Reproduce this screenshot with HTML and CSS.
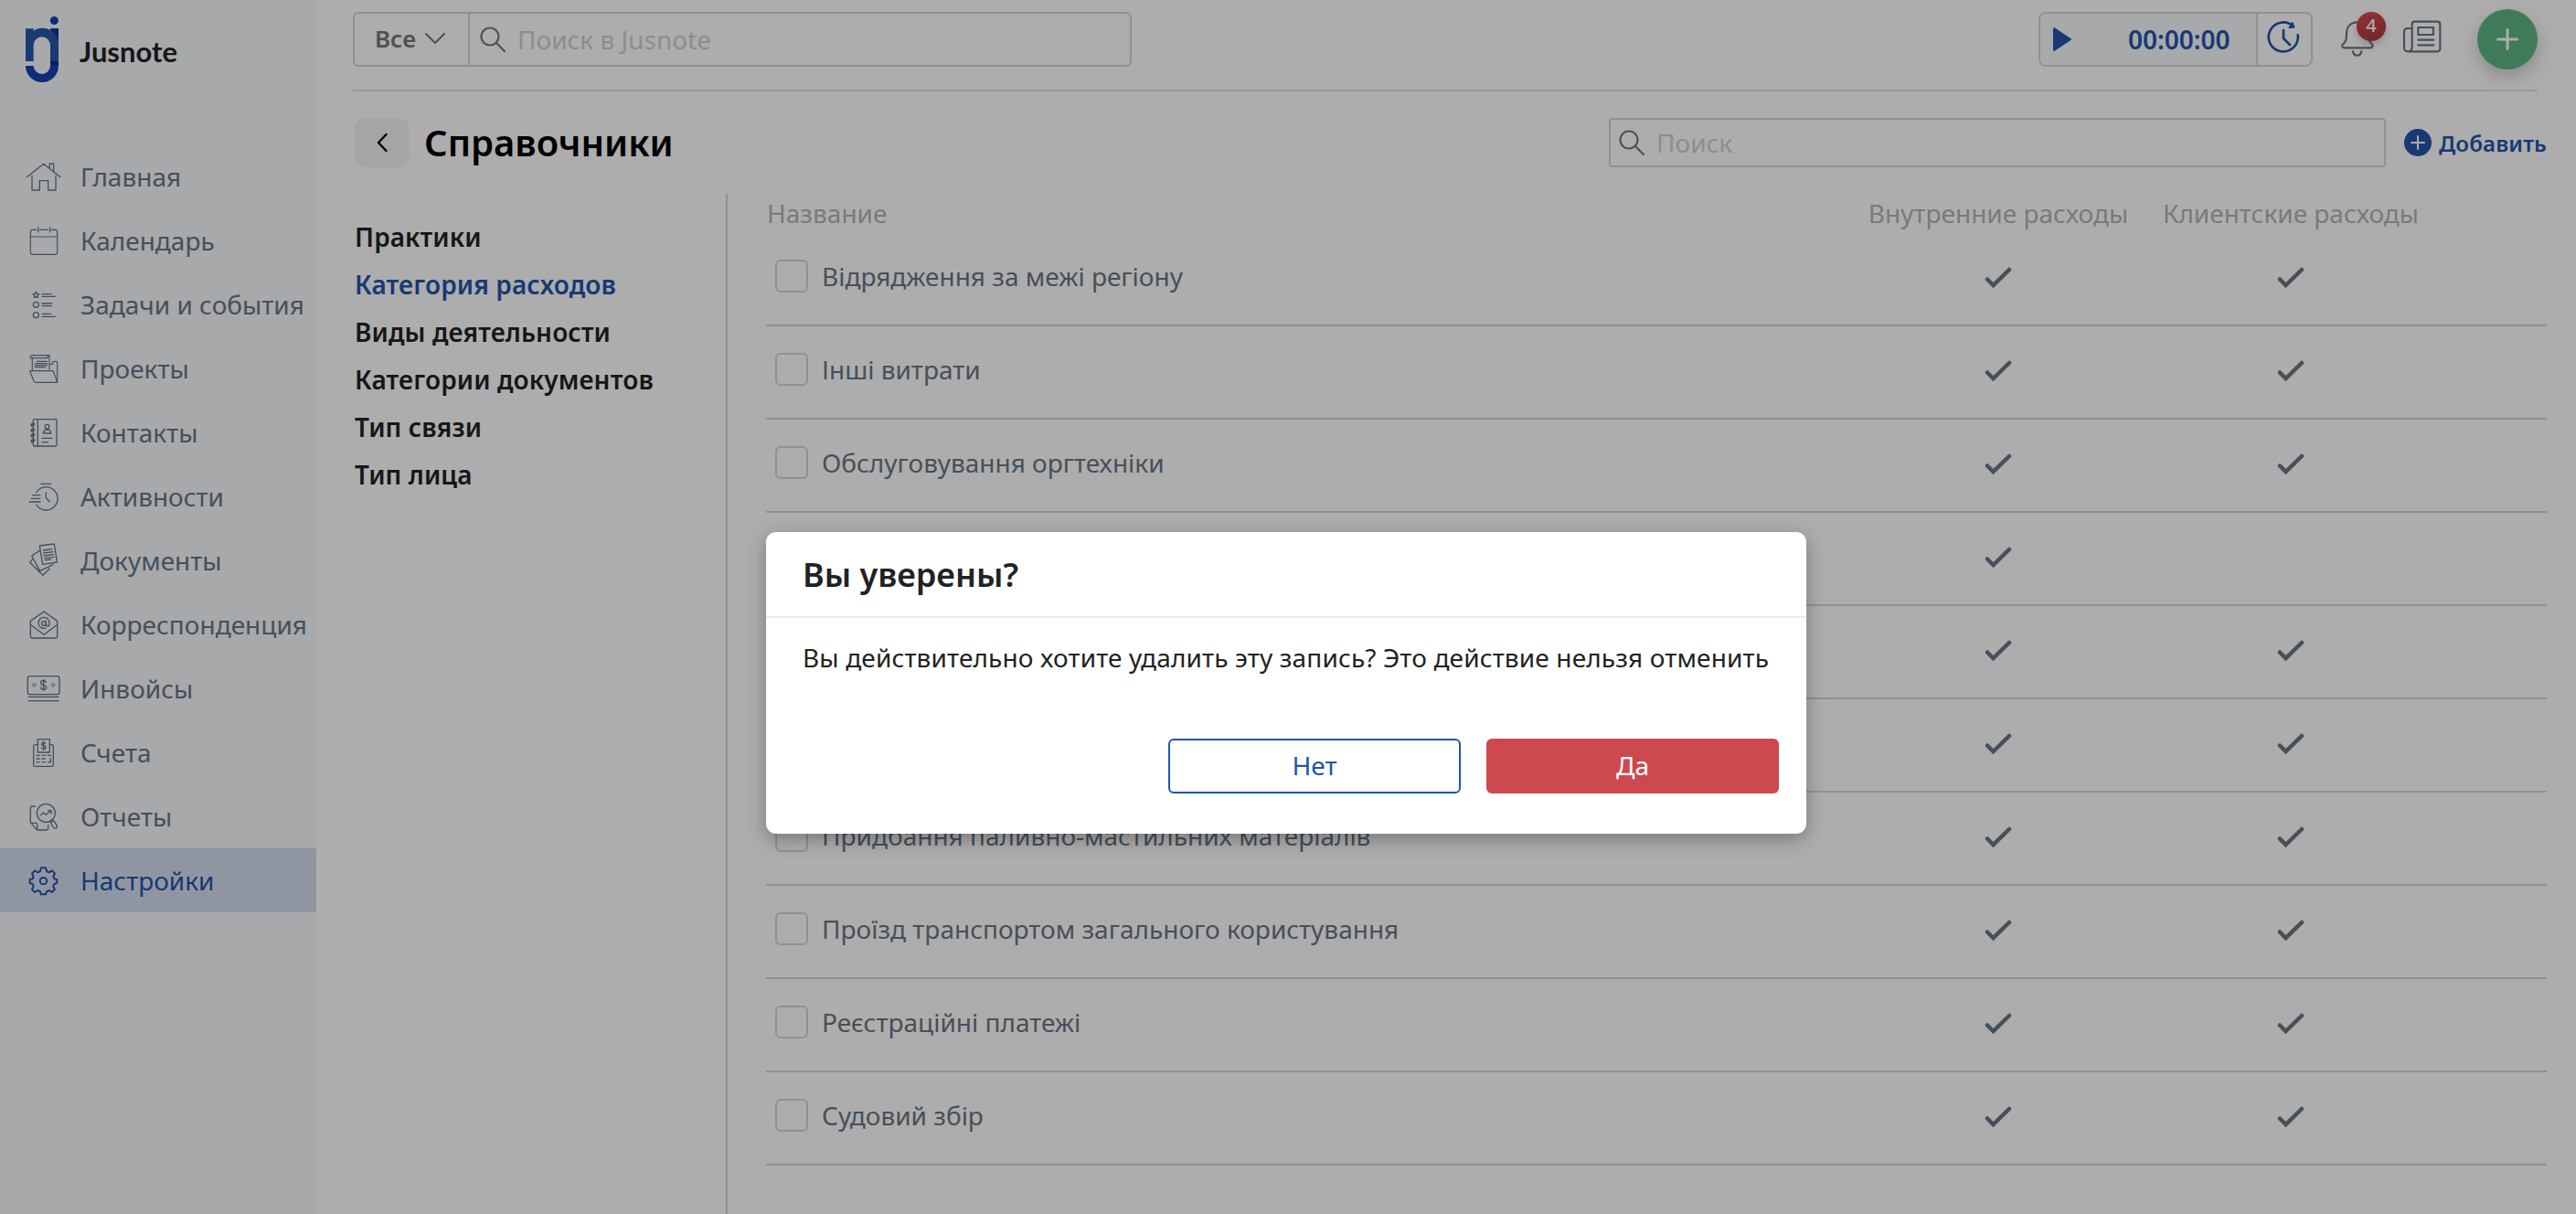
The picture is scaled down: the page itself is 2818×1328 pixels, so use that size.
FILE: index.html
```html
<!DOCTYPE html>
<html lang="ru">
<head>
    <meta charset="UTF-8">
    <meta name="viewport" content="width=device-width, initial-scale=1.0">
    <title>Jusnote - Справочники</title>
    <link rel="stylesheet" href="styles.css">
</head>
<body>
    <aside class="sidebar">
        <div class="logo">
            <svg class="logo-mark" viewBox="84 54 108 216">
                <circle cx="178" cy="67.500" r="13.500" fill="#1841b0"/>
                <path d="M165 94h27v122a54 54 0 0 1-108 0h26a27.500 27 0 0 0 55 0z" fill="#1841b0"/>
                <path d="M165 94h27v36z" fill="#0f3197"/>
                <path d="M165 201h27v14h-27z" fill="#102f8f"/>
                <path d="M84 94h26v7c8-6 17-9 28-9 31 0 54 22 54 52v57h-27v-53a27.500 27 0 0 0-55 0v53H84z" fill="#2556a8"/>
            </svg>
            <span class="logo-text">Jusnote</span>
        </div>
        <nav class="menu">
            <a class="menu-item">
                <svg viewBox="84 519 120 120"><path d="M88 581l55-43 55 43M105 577v47h25v-31h28v31h25v-47M163 551v-14h13v25"/></svg>
                <span>Главная</span>
            </a>
            <a class="menu-item thin">
                <svg viewBox="84 729 120 120"><path d="M119 754h-12q-7 0-7 7v67q0 7 7 7h74q7 0 7-7v-67q0-7-7-7h-13M130 754h28M125 746v16M164 746v16M100 777h88"/></svg>
                <span>Календарь</span>
            </a>
            <a class="menu-item">
                <svg viewBox="84 939 120 120"><path d="M118 957l3 7 7 1-5 5 1 7-6-4-6 4 1-7-5-5 7-1zM138 965h30M138 973h43M138 996h32M138 1004h32M138 1030h30M138 1039h43"/><circle cx="118" cy="1000" r="9"/><circle cx="118" cy="1034" r="9"/></svg>
                <span>Задачи и события</span>
            </a>
            <a class="menu-item thin">
                <svg viewBox="84 69 120 120"><path d="M106 135V95h-6q-2-9 7-9h55v46M106 95h50q0-9 6-9M165 115h8v-6q0-3 5-3h5q5 0 5 5v64M98 137h73q4 0 5 4l12 34h-71q-5 0-6-4zM121 106h34M115 113h40M115 119h40M115 125h34"/></svg>
                <span>Проекты</span>
            </a>
            <a class="menu-item">
                <svg viewBox="84 279 120 120"><rect x="109" y="296" width="77" height="88" rx="4"/><path d="M124 296v88M102 314h11M102 332h11M102 349h11M102 367h11M113 310q-11-1-11 4t6 5M113 328q-11-1-11 4t6 5M113 345q-11-1-11 4t6 5M113 363q-11-1-11 4t6 5M142 342q1-12 13-12t12 12zM138 358h33M138 371h20"/><circle cx="154.500" cy="320" r="7"/></svg>
                <span>Контакты</span>
            </a>
            <a class="menu-item">
                <svg viewBox="84 489 120 120"><path d="M134 508h34M119 536a38 38 0 1 1 0 40M151 536v18l12 12M107 545h25M103 556h29M97 567h35"/></svg>
                <span>Активности</span>
            </a>
            <a class="menu-item">
                <svg viewBox="84 699 120 120"><path d="M130 711l48-6 9 60-47 7zM130 727l-26 17 27 50 43-21M106 756l-8 10 43 42 22-22M142 726l28-4M143 735l31-4M144 744l31-4M146 752l31-4M149 758l17-2"/></svg>
                <span>Документы</span>
            </a>
            <a class="menu-item">
                <svg viewBox="24 39 120 120"><path d="M40 88l44-31 44 31v51q0 5-5 5H45q-5 0-5-5zM40 100l44 33 44-33M90 111a18 18 0 1 1 12-16q0 11-6 10-5 0-5-8V89"/><circle cx="84" cy="96" r="7"/></svg>
                <span>Корреспонденция</span>
            </a>
            <a class="menu-item">
                <svg viewBox="84 159 120 120"><rect x="91" y="179" width="104" height="60" rx="7"/><g stroke-width="2.500"><circle cx="112" cy="208" r="5"/><circle cx="174" cy="208" r="5"/></g><path d="M151 199q-2-6-9-6-8 0-8 7t8 8q10 2 10 9 0 6-9 6-8 0-9-7M143 190v36M94 247h98M94 260h98"/></svg>
                <span>Инвойсы</span>
            </a>
            <a class="menu-item">
                <svg viewBox="84 369 120 120"><path d="M124 404h-9q-5 0-5 5v61q0 5 5 5h55q5 0 5-5v-61q0-5-5-5h-7M124 386h39v43h-39zM149 400q-2-3-6-3-6 0-6 5t6 5q7 1 7 6t-7 5q-5 0-7-4M143 393v28M120 439h10M138 439h10M156 439h11M120 450h10M138 450h10M120 461h10M138 461h10M158 461h8v-12"/></svg>
                <span>Счета</span>
            </a>
            <a class="menu-item">
                <svg viewBox="84 579 120 120"><circle cx="151" cy="628" r="30"/><path d="M115 606h-10q-5 0-5 5v48l22 25h31q5 0 5-5v-12M101 661h17q4 0 4 5v18M133 635l9-8 8 7 17-13M158 620h10v10M168 652l4 5M166 659q-2-5 3-7 6-2 9 4l9 13q2 6-3 9-6 2-9-3z"/></svg>
                <span>Отчеты</span>
            </a>
            <a class="menu-item active">
                <svg viewBox="84 789 120 120"><circle cx="142.500" cy="851" r="11"/><path d="M135 808h15l3 11 8 4 10-6 9 10-5 9 3 8 9 2v12l-9 3-3 8 5 9-9 10-10-6-8 4-3 9h-15l-3-9-8-4-10 6-9-10 5-9-3-8-9-3v-12l9-2 3-8-5-9 9-10 10 6 8-4z"/></svg>
                <span>Настройки</span>
            </a>
        </nav>
    </aside>

    <main class="main">
        <header class="topbar">
            <div class="global-search">
                <div class="search-scope">
                    <span>Все</span>
                    <svg width="24" height="14" viewBox="0 0 24 14"><path d="M2 2l10 10L22 2"/></svg>
                </div>
                <div class="search-field">
                    <svg class="search-icon" viewBox="0 0 28 28"><circle cx="11" cy="11" r="9.500"/><path d="M18 18l9 9"/></svg>
                    <span>Поиск в Jusnote</span>
                </div>
            </div>
            <div class="topbar-right">
                <div class="timer">
                    <div class="timer-main">
                        <svg width="22" height="28" viewBox="0 0 22 28"><path d="M2 2v24l18-12z"/></svg>
                        <span>00:00:00</span>
                    </div>
                    <div class="timer-history">
                        <svg width="38" height="38" viewBox="117 66 114 114"><path d="M206 86a48 48 0 1 0 15 29M174 99v27l21 21"/><path d="M204 74l5 16-17 1z"/></svg>
                    </div>
                </div>
                <div class="bell">
                    <svg width="40" height="42" viewBox="363 63 120 126"><path d="M376 138c4-6 5-12 5-27 0-24 14-38 36-38s36 16 36 38c0 15 1 21 5 27l6 6q4 5 2 9-1 4-6 4h-86q-6 0-7-4-1-5 3-9zM402 168q2 14 14 14t14-14"/></svg>
                    <span class="badge">4</span>
                </div>
                <svg class="news" width="44" height="38" viewBox="564 63 132 114"><path d="M596 152V80q0-9 9-9h74q9 0 9 9v80q0 9-9 9h-96q-13 0-13-13v-51q0-12 12-12h14M596 152q0 17-13 17M616 90h50v24h-50zM616 131h51M616 148h51"/></svg>
                <button class="create-btn">
                    <svg width="24" height="24" viewBox="0 0 24 24"><path d="M12 1.500v21M1.500 12h21"/></svg>
                </button>
            </div>
        </header>

        <div class="page-head">
            <button class="back-btn">
                <svg width="12" height="22" viewBox="0 0 12 22"><path d="M10.500 2L2 11l8.500 9"/></svg>
            </button>
            <h1>Справочники</h1>
            <div class="page-search">
                <svg class="search-icon" viewBox="0 0 28 28"><circle cx="11" cy="11" r="9.500"/><path d="M18 18l9 9"/></svg>
                <span>Поиск</span>
            </div>
            <a class="add-link">
                <svg width="30" height="30" viewBox="0 0 30 30"><circle cx="15" cy="15" r="15"/><path d="M15 8v14M8 15h14"/></svg>
                <span>Добавить</span>
            </a>
        </div>

        <div class="content">
            <nav class="subnav">
                <a>Практики</a>
                <a class="active">Категория расходов</a>
                <a>Виды деятельности</a>
                <a>Категории документов</a>
                <a>Тип связи</a>
                <a>Тип лица</a>
            </nav>
            <section class="table">
                <div class="table-head">
                    <span>Название</span>
                    <span class="center">Внутренние расходы</span>
                    <span class="center">Клиентские расходы</span>
                </div>
                <div id="rows"></div>
            </section>
        </div>
    </main>

    <div class="overlay">
        <div class="modal">
            <h2 class="modal-title">Вы уверены?</h2>
            <p class="modal-text">Вы действительно хотите удалить эту запись? Это действие нельзя отменить</p>
            <div class="modal-actions">
                <button class="btn btn-outline">Нет</button>
                <button class="btn btn-danger">Да</button>
            </div>
        </div>
    </div>

    <script>
        // name, internal expense, client expense
        const categories = [
            ['Відрядження за межі регіону', true, true],
            ['Інші витрати', true, true],
            ['Обслуговування оргтехніки', true, true],
            ['', true, false],
            ['', true, true],
            ['', true, true],
            ['Придбання паливно-мастильних матеріалів', true, true],
            ['Проїзд транспортом загального користування', true, true],
            ['Реєстраційні платежі', true, true],
            ['Судовий збір', true, true]
        ];
        const check = '<svg width="30" height="24" viewBox="0 0 30 24"><path d="M3 13.500l6.500 6.500L27 3"/></svg>';

        document.getElementById('rows').innerHTML = categories.map(([name, internal, client]) => `
            <div class="row">
                <div class="row-name"><span class="checkbox"></span>${name}</div>
                <div class="center">${internal ? check : ''}</div>
                <div class="center">${client ? check : ''}</div>
            </div>`).join('');
    </script>
</body>
</html>
```
FILE: styles.css
```css
* {
    box-sizing: border-box;
}
body {
    display: flex;
    height: 1328px;
    margin: 0;
    overflow: hidden;
    background: #fff;
    color: #222;
    font-family: "Noto Sans", sans-serif;
    font-size: 28px;
}
svg {
    flex-shrink: 0;
    fill: none;
    stroke-linecap: round;
    stroke-linejoin: round;
}
button {
    padding: 0;
    border: none;
    font-family: inherit;
    font-size: inherit;
}

/* Sidebar */
.sidebar {
    flex: 0 0 346px;
    background: #f6f9fc;
}
.logo {
    display: flex;
    height: 158px;
    padding: 18px 0 0 28px;
}
.logo-mark {
    width: 36px;
    height: 72px;
}
.logo-text {
    margin: 18px 0 0 23px;
    font-family: Lato, sans-serif;
    font-size: 31px;
    font-weight: 700;
    line-height: 40px;
}
.menu-item {
    display: flex;
    align-items: center;
    gap: 20px;
    height: 70px;
    padding-left: 28px;
    color: #687686;
    white-space: nowrap;
}
.menu-item svg {
    width: 40px;
    height: 40px;
    stroke: currentColor;
    stroke-width: 4;
}
.menu-item.thin svg {
    stroke-width: 3.5;
}
.menu-item.active {
    background: #d4deed;
    color: #2454aa;
}
.menu-item.active svg {
    stroke-width: 6;
}

/* Top bar */
.main {
    flex: 1;
    display: flex;
    flex-direction: column;
}
.topbar {
    display: flex;
    justify-content: space-between;
    height: 100px;
    margin: 0 42px 0 40px;
    padding-top: 13px;
    border-bottom: 2px solid #e4e4e4;
}
.global-search {
    display: flex;
    width: 852px;
    height: 60px;
    border: 2px solid #d5d5d5;
    border-radius: 6px;
}
.search-scope {
    display: flex;
    align-items: center;
    gap: 9px;
    width: 126px;
    padding: 0 0 2px 22px;
    border-right: 2px solid #d5d5d5;
    color: #777;
    font-size: 26px;
    font-weight: 600;
}
.search-scope svg {
    stroke: #777;
    stroke-width: 2;
}
.search-field,
.page-search {
    display: flex;
    align-items: center;
    color: #d0d0d0;
}
.search-field {
    gap: 13px;
    padding: 0 0 1px 11px;
}
.search-icon {
    width: 28px;
    height: 28px;
    stroke: #777;
    stroke-width: 2.2;
}
.topbar-right {
    display: flex;
}
.timer {
    display: flex;
    width: 300px;
    height: 60px;
    margin-right: 31px;
    border: 2px solid #d5d5d5;
    border-radius: 8px;
    color: #2454aa;
    font-weight: 600;
    overflow: hidden;
}
.timer-main {
    display: flex;
    align-items: center;
    gap: 61px;
    width: 238px;
    padding: 0 0 1px 13px;
    border-right: 2px solid #d5d5d5;
    background: #f6f9fc;
}
.timer-main svg {
    fill: #2454aa;
    stroke: #2454aa;
    stroke-width: 2;
}
.timer-history {
    display: flex;
    padding: 7px 0 0 9px;
}
.timer-history svg {
    stroke: #2454aa;
    stroke-width: 8;
}
.timer-history path + path {
    fill: #2454aa;
    stroke-width: 4;
}
.bell {
    position: relative;
    width: 40px;
    height: 42px;
    margin: 8px 27px 0 0;
}
.bell svg,
.news {
    stroke: #687686;
    stroke-width: 6.5;
}
.badge {
    position: absolute;
    top: -8px;
    left: 17px;
    width: 32px;
    height: 32px;
    border-radius: 50%;
    background: linear-gradient(160deg, #d84a50, #a8343a);
    box-shadow: 0 4px 8px rgba(0, 0, 0, 0.2);
    color: #fff;
    font-size: 20px;
    font-weight: 500;
    line-height: 30px;
    text-align: center;
}
.news {
    margin: 8px 38px 0 0;
}
.create-btn {
    width: 66px;
    height: 66px;
    margin-top: -3px;
    padding: 1px 1px 0 0;
    border-radius: 50%;
    background: #5db683;
    box-shadow: 0 8px 20px rgba(0, 0, 0, 0.2);
}
.create-btn svg {
    stroke: #fff;
    stroke-width: 3;
}

/* Page header */
.page-head {
    display: flex;
    align-items: center;
    margin: 29px 32px 0 42px;
}
.back-btn {
    display: flex;
    align-items: center;
    justify-content: center;
    width: 60px;
    height: 54px;
    border-radius: 12px;
    background: #f4f4f4;
}
.back-btn svg {
    stroke: #000;
    stroke-width: 2.4;
}
h1 {
    flex: 1;
    margin: 0 0 0 16px;
    color: #000;
    font-size: 40px;
    font-weight: 600;
    line-height: 52px;
}
.page-search {
    gap: 13px;
    width: 850px;
    height: 54px;
    padding-left: 9px;
    border: 2px solid #d5d5d5;
    border-radius: 4px;
}
.add-link {
    display: flex;
    align-items: center;
    gap: 8px;
    width: 176px;
    padding-left: 20px;
    color: #2454aa;
    font-size: 24px;
    font-weight: 600;
    letter-spacing: 0.15px;
}
.add-link svg {
    fill: #2454aa;
    stroke-width: 2;
}
.add-link path {
    stroke: #fff;
}

/* Directory content */
.content {
    flex: 1;
    display: flex;
    margin: 29px 32px 0 42px;
}
.subnav {
    display: flex;
    flex-direction: column;
    width: 408px;
    padding-top: 21px;
    border-right: 2px solid #d5d5d5;
    font-weight: 600;
    letter-spacing: 0.1px;
    line-height: 52px;
}
.subnav .active {
    color: #2454aa;
}
.table {
    flex: 1;
    margin-left: 42px;
}
.table-head,
.row {
    display: grid;
    grid-template-columns: 1fr 320px 320px 120px;
}
.table-head {
    height: 43px;
    padding-left: 1px;
    color: #b4b4b4;
    line-height: 42px;
}
.row {
    align-items: center;
    height: 102px;
    padding-bottom: 6px;
    border-bottom: 2px solid #d5d5d5;
    color: #687686;
}
.row-name {
    display: flex;
    align-items: center;
    gap: 15px;
    height: 38px;
    padding-left: 10px;
}
.checkbox {
    width: 36px;
    height: 36px;
    border: 2px solid #d5d5d5;
    border-radius: 6px;
}
.center {
    text-align: center;
}
.row svg {
    display: block;
    margin: 4px auto 0;
    stroke: #687686;
    stroke-width: 4.5;
    stroke-linejoin: miter;
}

/* Confirm dialog */
.overlay {
    position: absolute;
    inset: 0;
    padding: 582px 0 0 838px;
    background: rgba(0, 0, 0, 0.32);
}
.modal {
    width: 1138px;
    height: 330px;
    border-radius: 11px;
    background: #fff;
    box-shadow: 0 6px 20px rgba(0, 0, 0, 0.3);
}
.modal-title {
    height: 94px;
    margin: 0;
    padding-left: 40px;
    border-bottom: 2px solid #ebebeb;
    font-size: 36px;
    font-weight: 600;
    line-height: 93px;
}
.modal-text {
    height: 132px;
    margin: 0;
    padding: 23px 0 0 40px;
    letter-spacing: 0.15px;
    line-height: 40px;
    white-space: nowrap;
}
.modal-actions {
    display: flex;
    justify-content: flex-end;
    gap: 28px;
    padding-right: 30px;
}
.btn {
    width: 320px;
    height: 60px;
    padding-bottom: 2px;
    border-radius: 6px;
}
.btn-outline {
    border: 2px solid #2454aa;
    background: #fff;
    color: #2454aa;
}
.btn-danger {
    background: #cd484f;
    color: #fff;
}
```
